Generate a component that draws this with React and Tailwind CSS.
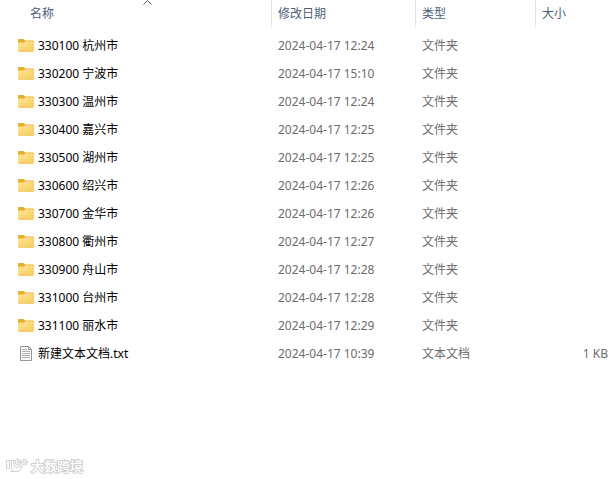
import { useState } from 'react'

const FILES = [
  { name: '330100 杭州市', modified: '2024-04-17 12:24', type: '文件夹' },
  { name: '330200 宁波市', modified: '2024-04-17 15:10', type: '文件夹' },
  { name: '330300 温州市', modified: '2024-04-17 12:24', type: '文件夹' },
  { name: '330400 嘉兴市', modified: '2024-04-17 12:25', type: '文件夹' },
  { name: '330500 湖州市', modified: '2024-04-17 12:25', type: '文件夹' },
  { name: '330600 绍兴市', modified: '2024-04-17 12:26', type: '文件夹' },
  { name: '330700 金华市', modified: '2024-04-17 12:26', type: '文件夹' },
  { name: '330800 衢州市', modified: '2024-04-17 12:27', type: '文件夹' },
  { name: '330900 舟山市', modified: '2024-04-17 12:28', type: '文件夹' },
  { name: '331000 台州市', modified: '2024-04-17 12:28', type: '文件夹' },
  { name: '331100 丽水市', modified: '2024-04-17 12:29', type: '文件夹' },
  { name: '新建文本文档.txt', modified: '2024-04-17 10:39', type: '文本文档', size: '1 KB' },
]

const COLUMNS = [
  { key: 'name', label: '名称' },
  { key: 'modified', label: '修改日期' },
  { key: 'type', label: '类型' },
  { key: 'size', label: '大小' },
]

function FolderIcon() {
  return (
    <svg className="w-4 h-4 shrink-0" viewBox="0 0 16 16" aria-hidden="true">
      <defs>
        <linearGradient id="folder" x1="0" y1="0" x2="1" y2="1">
          <stop offset="0" stopColor="#ffe596" />
          <stop offset="1" stopColor="#f6cd5e" />
        </linearGradient>
      </defs>
      <path d="M0 2a1 1 0 0 1 1-1h4.6l1.7 1.5H15a1 1 0 0 1 1 1V7H0z" fill="#e3b02c" />
      <path d="M0 5.4a1 1 0 0 1 1-1h4.8l1.7-1.2H15a1 1 0 0 1 1 1v8.3a1 1 0 0 1-1 1H1a1 1 0 0 1-1-1z" fill="url(#folder)" />
      <path d="M0.3 12.8q.2.7.9.7h13.6q.7 0 .9-.7z" fill="#e6b842" />
    </svg>
  )
}

function TextFileIcon() {
  return (
    <svg className="w-4 h-4 shrink-0" viewBox="0 0 16 16" fill="none" aria-hidden="true">
      <path d="M2.5.5h8l3 3v11h-11z" fill="#fbfbfb" stroke="#949494" />
      <path d="M10.5.5v3h3" stroke="#949494" />
      <path d="M4 3.5h5M4 5.5h8M4 7.5h8M4 9.5h8M4 11.5h8" stroke="#b0b0b0" />
    </svg>
  )
}

function Watermark() {
  return (
    <div className="flex items-center gap-0.5 text-[13px] leading-4 text-white">
      <svg className="w-[23px] h-4" viewBox="0 0 23 16" fill="none" stroke="#c4c4c4" strokeWidth=".8" strokeLinecap="round" strokeLinejoin="round" aria-hidden="true">
        <path d="M1 2.5h2.6v8.2H1z" />
        <path d="M5.4 2.5H8v4.2q0 3 2.6 3 2 0 2.8-1.6h2.4q-.4 5.4-5.6 5.4H4.6q2-1 2-2.4-1.2-1.400-1.200-3.600z" />
        <circle cx="12" cy="4.200" r="3" />
        <circle cx="12" cy="4.200" r="1.200" />
        <circle cx="18.500" cy="4.200" r="3" />
        <circle cx="18.500" cy="4.200" r="1.200" />
      </svg>
      <span className="font-medium [-webkit-text-stroke:2px_#cfcfcf] [paint-order:stroke_fill]">大数跨境</span>
    </div>
  )
}

export default function App() {
  const [sort, setSort] = useState({ key: 'name', asc: true })

  const toggleSort = key => {
    setSort(prev => ({ key, asc: prev.key === key ? !prev.asc : true }))
  }

  const files = [...FILES].sort((a, b) => {
    const order = (a[sort.key] || '') < (b[sort.key] || '') ? -1 : 1
    return sort.asc ? order : -order
  })

  return (
    <div className="min-h-screen flex flex-col bg-white text-[12px] leading-4 font-['Noto_Sans','Noto_Sans_CJK_SC',sans-serif]">
      <table className="w-full table-fixed border-collapse">
        <colgroup>
          <col className="w-[271px]" />
          <col className="w-36" />
          <col className="w-[120px]" />
          <col />
        </colgroup>
        <thead>
          <tr>
            {COLUMNS.map(col => (
              <th key={col.key} className="p-0 pb-[5px] text-left font-normal">
                <button
                  type="button"
                  onClick={() => toggleSort(col.key)}
                  className={`relative flex items-center w-full h-[27px] text-[#4c607a] ${
                    col.key === 'name' ? 'pl-[30px]' : 'pl-1.5 border-l border-[#e5e5e5]'
                  }`}
                >
                  {col.label}
                  {sort.key === col.key && (
                    <svg
                      className={`absolute top-0 inset-x-0 mx-auto translate-x-3 w-[9px] h-[5px] ${sort.asc ? '' : 'rotate-180'}`}
                      viewBox="0 0 9 5"
                      fill="none"
                      stroke="#5a5a5a"
                      aria-hidden="true"
                    >
                      <path d="M.5 4.5l4-4 4 4" />
                    </svg>
                  )}
                </button>
              </th>
            ))}
          </tr>
        </thead>
        <tbody>
          {files.map(file => (
            <tr key={file.name} className="h-7 text-[#6d6d6d] whitespace-nowrap hover:bg-[#e5f3ff]">
              <td className="p-0 pl-[18px] text-black">
                <div className="flex items-center gap-1">
                  {file.type === '文件夹' ? <FolderIcon /> : <TextFileIcon />}
                  <span>{file.name}</span>
                </div>
              </td>
              <td className="p-0 pl-[7px]">{file.modified}</td>
              <td className="p-0 pl-[7px]">{file.type}</td>
              <td className="p-0 pr-1.5 text-right">{file.size}</td>
            </tr>
          ))}
        </tbody>
      </table>
      <footer className="mt-auto pl-1.5 pb-[5px]">
        <Watermark />
      </footer>
    </div>
  )
}
